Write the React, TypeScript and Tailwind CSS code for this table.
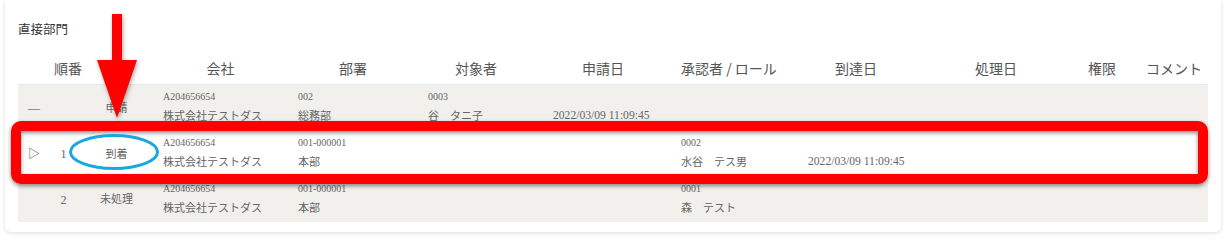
import React from 'react';

type Row = {
  mark: string;
  no: string;
  status: string;
  company: [string, string];
  dept: [string, string];
  target: [string, string];
  applied: [string, string];
  approver: [string, string];
  arrived: [string, string];
  bg: string;
};

const rows: Row[] = [
  {
    mark: '—',
    no: '',
    status: '申請',
    company: ['A204656654', '株式会社テストダス'],
    dept: ['002', '総務部'],
    target: ['0003', '谷　タニ子'],
    applied: ['', '2022/03/09 11:09:45'],
    approver: ['', ''],
    arrived: ['', ''],
    bg: 'bg-[#f1f0ed]',
  },
  {
    mark: '▷',
    no: '1',
    status: '到着',
    company: ['A204656654', '株式会社テストダス'],
    dept: ['001-000001', '本部'],
    target: ['', ''],
    applied: ['', ''],
    approver: ['0002', '水谷　テス男'],
    arrived: ['', '2022/03/09 11:09:45'],
    bg: 'bg-white',
  },
  {
    mark: '',
    no: '2',
    status: '未処理',
    company: ['A204656654', '株式会社テストダス'],
    dept: ['001-000001', '本部'],
    target: ['', ''],
    applied: ['', ''],
    approver: ['0001', '森　テスト'],
    arrived: ['', ''],
    bg: 'bg-[#f1f0ed]',
  },
];

const cols = 'grid grid-cols-[30px_40px_65px_135px_130px_125px_128px_127px_116px_164px_48px_81px]';

// dates come out a touch wider than the names in the screenshot
const isDate = (s: string) => /^\d{4}\//.test(s);

const TwoLine = ({ v }: { v: [string, string] }) => (
  <div className="flex flex-col pt-[5px] pl-[10px] whitespace-nowrap">
    <span className="text-[10px] leading-[14px] h-[14px]">{v[0]}</span>
    <span className={`${isDate(v[1]) ? 'text-[11.6px]' : 'text-[11px]'} leading-[24px] h-[24px]`}>{v[1]}</span>
  </div>
);

export default function App() {
  return (
    <div className="relative w-[1231px] h-[241px] overflow-hidden bg-white pl-[5px]">
      <div className="w-[1216px] rounded-b-md bg-white shadow-[0_1px_4px_rgba(0,0,0,0.14)] pt-[22px] px-[13px] pb-[10px]">
        <div className="text-[12.5px] leading-[14px] text-[#333] font-['Noto_Sans_CJK_JP',sans-serif]">直接部門</div>

        <div className={`${cols} mt-[16px] h-[33px] items-center border-b border-[#e3e8ef] text-[14px] text-[#555] font-['Noto_Sans_CJK_JP',sans-serif]`}>
          <div />
          <div className="text-center whitespace-nowrap">順番</div>
          <div />
          <div className="text-center">会社</div>
          <div className="text-center">部署</div>
          <div className="text-center pr-[9px]">対象者</div>
          <div className="text-center pr-[8px]">申請日</div>
          <div className="text-center pr-[11px] whitespace-nowrap">承認者 / ロール</div>
          <div className="text-center">到達日</div>
          <div className="text-center">処理日</div>
          <div className="text-center whitespace-nowrap">権限</div>
          <div className="text-center pl-[15px] whitespace-nowrap">コメント</div>
        </div>

        {rows.map((r, i) => (
          <div
            key={i}
            className={`${cols} ${r.bg} ${i === 2 ? 'h-[45px]' : 'h-[46px]'} text-[#666] font-['Liberation_Serif','Noto_Sans_CJK_JP',serif]`}
          >
            <div className="flex items-center pl-[10px] text-[12px] text-[#444]">{r.mark}</div>
            <div className="flex items-center justify-center pr-[9px] text-[12px]">{r.no}</div>
            <div className="flex items-center justify-center pr-[8px] text-[11px] whitespace-nowrap">{r.status}</div>
            <TwoLine v={r.company} />
            <TwoLine v={r.dept} />
            <TwoLine v={r.target} />
            <TwoLine v={r.applied} />
            <TwoLine v={r.approver} />
            <TwoLine v={r.arrived} />
            <div />
            <div />
            <div />
          </div>
        ))}
      </div>

      {/* callouts drawn over the table */}
      <div className="absolute left-[11px] top-[121px] w-[1197px] h-[63px] rounded-[10px] border-[10px] border-[#ff0000] drop-shadow-[0_2px_2px_rgba(0,0,0,0.45)]" />

      <svg className="absolute left-[68px] top-[133px]" width="92" height="40" viewBox="0 0 92 40">
        <ellipse cx="46" cy="19" rx="43.5" ry="16.5" fill="none" stroke="#1aa7e1" strokeWidth="3" />
      </svg>

      <svg
        className="absolute left-[95px] top-[12px] drop-shadow-[1px_2px_2px_rgba(0,0,0,0.35)]"
        width="45"
        height="110"
        viewBox="0 0 45 110"
      >
        <rect x="17" y="2" width="10" height="48" fill="#ff0000" />
        <polygon points="2,48 42,48 22,106" fill="#ff0000" />
      </svg>
    </div>
  );
}
